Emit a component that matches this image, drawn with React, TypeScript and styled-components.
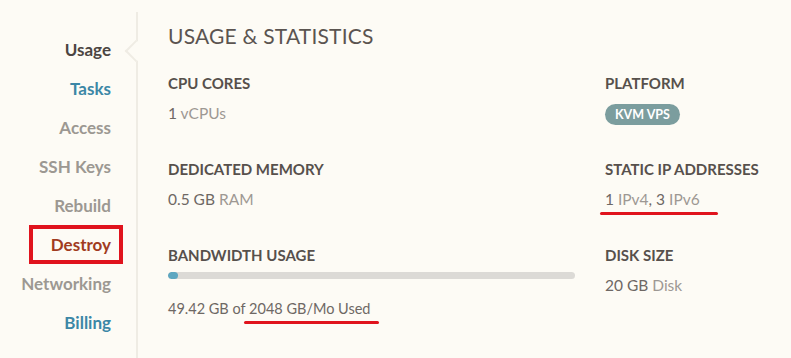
import * as React from "react";
import styled, { createGlobalStyle } from "styled-components";

const GlobalStyle = createGlobalStyle`
  html, body {
    margin: 0;
    padding: 0;
    background: #fdfbf5;
    font-family: Lato, "Open Sans", sans-serif;
  }
`;

const Page = styled.div`
  display: flex;
  width: 791px;
  height: 358px;
  background: #fdfbf5;
  overflow: hidden;
`;

const SideNav = styled.nav`
  width: 136px;
  flex-shrink: 0;
  display: flex;
  flex-direction: column;
  align-items: flex-end;
  padding-top: 38px;
  box-sizing: border-box;
`;

type NavTone = "active" | "link" | "muted" | "danger";

const navColors: Record<NavTone, string> = {
  active: "#4c4542",
  link: "#3c87a6",
  muted: "#9c9892",
  danger: "#a13b1f",
};

const NavItem = styled.a<{ $tone: NavTone; $marked?: boolean }>`
  display: block;
  height: 39px;
  line-height: 24px;
  padding-right: 25px;
  box-sizing: border-box;
  font-size: 17px;
  font-weight: 700;
  color: ${(p) => navColors[p.$tone]};
  text-decoration: none;
  position: relative;

  ${(p) =>
    p.$marked &&
    `
    &::after {
      content: "";
      position: absolute;
      left: -22px;
      right: 13px;
      top: -8px;
      height: 39px;
      border: 4px solid #e0131d;
      box-sizing: border-box;
    }
  `}
`;

const Divider = styled.div`
  width: 2px;
  margin-top: 12px;
  background: #efece4;
  position: relative;
  flex-shrink: 0;

  &::before {
    content: "";
    position: absolute;
    top: 31px;
    left: -8px;
    width: 14px;
    height: 14px;
    background: #fdfbf5;
    border-left: 2px solid #efece4;
    border-bottom: 2px solid #efece4;
    transform: rotate(45deg);
  }
`;

const Main = styled.main`
  flex: 1;
  padding: 22px 0 0 30px;
`;

const Title = styled.h1`
  margin: 0 0 23px;
  font-size: 21px;
  font-weight: 400;
  letter-spacing: 0.2px;
  color: #5b5450;
  line-height: 28px;
`;

const StatsGrid = styled.div`
  display: grid;
  grid-template-columns: 407px 1fr;
  column-gap: 30px;
  grid-auto-rows: 86px;
`;

const Stat = styled.section`
  display: flex;
  flex-direction: column;
`;

const Label = styled.h2`
  margin: 0;
  font-size: 15px;
  font-weight: 700;
  color: #57504c;
  line-height: 20px;
`;

const Value = styled.div`
  margin-top: 10px;
  font-size: 15.5px;
  color: #6e6864;
  line-height: 20px;
`;

const Unit = styled.span`
  color: #9d9893;
`;

const Marked = styled.span<{ $left: number; $right: number }>`
  position: relative;

  &::after {
    content: "";
    position: absolute;
    left: ${(p) => p.$left}px;
    right: ${(p) => p.$right}px;
    bottom: -7px;
    height: 3px;
    border-radius: 2px;
    background: #e0131d;
  }
`;

const Badge = styled.span`
  align-self: flex-start;
  margin-top: 11px;
  padding: 0 10px;
  height: 21px;
  line-height: 21px;
  border-radius: 11px;
  background: #7b9d9e;
  color: #ffffff;
  font-size: 12.5px;
  font-weight: 700;
`;

const Track = styled.div`
  margin-top: 7px;
  width: 407px;
  height: 7px;
  border-radius: 4px;
  background: #dcdad6;
  overflow: hidden;
`;

const Fill = styled.div`
  height: 100%;
  min-width: 9px;
  border-radius: 4px;
  background: #5ea7c1;
`;

const BandwidthValue = styled(Value)`
  margin-top: 20px;
  font-size: 14.5px;
`;

const nav: { label: string; tone: NavTone; marked?: boolean }[] = [
  { label: "Usage", tone: "active" },
  { label: "Tasks", tone: "link" },
  { label: "Access", tone: "muted" },
  { label: "SSH Keys", tone: "muted" },
  { label: "Rebuild", tone: "muted" },
  { label: "Destroy", tone: "danger", marked: true },
  { label: "Networking", tone: "muted" },
  { label: "Billing", tone: "link" },
];

export default function App(): JSX.Element {
  const used = 49.42;
  const total = 2048;
  return (
    <>
      <GlobalStyle />
      <Page>
        <SideNav>
          {nav.map((n) => (
            <NavItem key={n.label} $tone={n.tone} $marked={n.marked}>
              {n.label}
            </NavItem>
          ))}
        </SideNav>
        <Divider />
        <Main>
          <Title>USAGE &amp; STATISTICS</Title>
          <StatsGrid>
            <Stat>
              <Label>CPU CORES</Label>
              <Value>
                1 <Unit>vCPUs</Unit>
              </Value>
            </Stat>
            <Stat>
              <Label>PLATFORM</Label>
              <Badge>KVM VPS</Badge>
            </Stat>
            <Stat>
              <Label>DEDICATED MEMORY</Label>
              <Value>
                0.5 GB <Unit>RAM</Unit>
              </Value>
            </Stat>
            <Stat>
              <Label>STATIC IP ADDRESSES</Label>
              <Value>
                <Marked $left={-5} $right={-18}>
                  1 <Unit>IPv4</Unit>, 3 <Unit>IPv6</Unit>
                </Marked>
              </Value>
            </Stat>
            <Stat>
              <Label>BANDWIDTH USAGE</Label>
              <Track>
                <Fill style={{ width: `${(used / total) * 100}%` }} />
              </Track>
              <BandwidthValue>
                {used} GB of{" "}
                <Marked $left={-5} $right={-9}>
                  {total} GB/Mo Used
                </Marked>
              </BandwidthValue>
            </Stat>
            <Stat>
              <Label>DISK SIZE</Label>
              <Value>
                20 GB <Unit>Disk</Unit>
              </Value>
            </Stat>
          </StatsGrid>
        </Main>
      </Page>
    </>
  );
}
